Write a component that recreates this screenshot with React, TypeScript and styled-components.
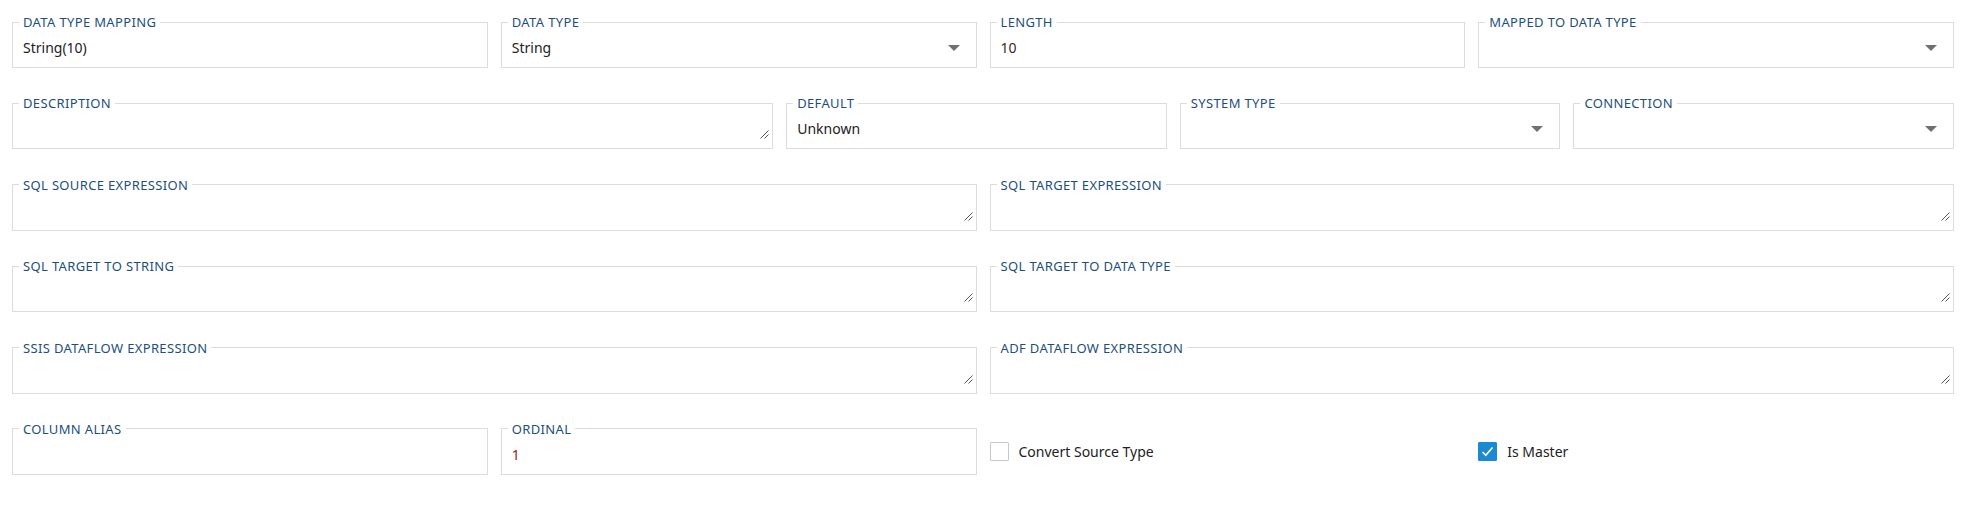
import * as React from "react";
import styled, { createGlobalStyle } from "styled-components";

const GlobalStyle = createGlobalStyle`
  html, body {
    margin: 0;
    padding: 0;
    background: #ffffff;
  }
  body {
    font-family: "Noto Sans", "Open Sans", "Liberation Sans", sans-serif;
    color: #222222;
  }
`;

const Form = styled.div`
  box-sizing: border-box;
  width: 1972px;
  display: flex;
  flex-direction: column;
  gap: 28.4px;
  padding: 15px 18px 40px 12px;
`;

const Row = styled.div<{ $cols: string }>`
  display: grid;
  grid-template-columns: ${(p) => p.$cols};
  column-gap: 13px;
`;

const Field = styled.fieldset<{ $kind?: "input" | "select" | "area" }>`
  margin: 0;
  min-width: 0;
  border: 1px solid #dcdcdc;
  padding: 0
    ${(p) => (p.$kind === "select" ? "16px" : p.$kind === "area" ? "3px" : "10px")}
    0 10px;
`;

const Legend = styled.legend`
  margin-left: -4px;
  padding: 0 4px;
  font-size: 13px;
  line-height: 14px;
  letter-spacing: 0.35px;
  color: #1d4f7c;
  text-transform: uppercase;
  white-space: nowrap;
`;

const Value = styled.div<{ $tone?: "plain" | "number" | "red" }>`
  box-sizing: border-box;
  height: 38px;
  padding: 9px 0;
  display: flex;
  align-items: center;
  justify-content: space-between;
  font-size: 14px;
  line-height: 20px;
  color: ${(p) =>
    p.$tone === "red" ? "#8a1c2c" : p.$tone === "number" ? "#3a2a22" : "#222222"};
`;

const AreaBody = styled.div`
  box-sizing: border-box;
  height: 38px;
  padding: 9px 0;
  display: flex;
  align-items: flex-end;
  justify-content: flex-end;
`;

const Caret = styled.span`
  width: 0;
  height: 0;
  border-left: 6px solid transparent;
  border-right: 6px solid transparent;
  border-top: 6px solid #707070;
  flex: none;
`;

const CheckCell = styled.label`
  display: flex;
  align-items: center;
  gap: 10px;
  padding-top: 7px;
  font-size: 14px;
  color: #222222;
`;

const Box = styled.span<{ $checked?: boolean }>`
  box-sizing: border-box;
  width: 19px;
  height: 19px;
  flex: none;
  border: 1px solid ${(p) => (p.$checked ? "#1b8ad3" : "#c9c9c9")};
  background: ${(p) => (p.$checked ? "#1b8ad3" : "#ffffff")};
  border-radius: 1px;
  display: flex;
  align-items: center;
  justify-content: center;
`;

function Grip() {
  return (
    <svg width="9" height="9" viewBox="0 0 9 9">
      <line x1="0.5" y1="8.5" x2="8.5" y2="0.5" stroke="#555" strokeWidth="1" />
      <line x1="4.5" y1="8.5" x2="8.5" y2="4.5" stroke="#555" strokeWidth="1" />
    </svg>
  );
}

function TextField(props: { label: string; value?: string; tone?: "plain" | "number" | "red" }) {
  return (
    <Field $kind="input">
      <Legend>{props.label}</Legend>
      <Value $tone={props.tone}>{props.value}</Value>
    </Field>
  );
}

function SelectField(props: { label: string; value?: string }) {
  return (
    <Field $kind="select">
      <Legend>{props.label}</Legend>
      <Value>
        <span>{props.value}</span>
        <Caret />
      </Value>
    </Field>
  );
}

function AreaField(props: { label: string }) {
  return (
    <Field $kind="area">
      <Legend>{props.label}</Legend>
      <AreaBody>
        <Grip />
      </AreaBody>
    </Field>
  );
}

function Check(props: { label: string; checked?: boolean }) {
  return (
    <CheckCell>
      <Box $checked={props.checked}>
        {props.checked && (
          <svg width="13" height="11" viewBox="0 0 13 11">
            <path d="M1.5 6 L4.8 9.3 L11.5 1.5" fill="none" stroke="#fff" strokeWidth="1.6" />
          </svg>
        )}
      </Box>
      {props.label}
    </CheckCell>
  );
}

export default function App(): React.ReactElement {
  return (
    <>
      <GlobalStyle />
      <Form>
        <Row $cols="1fr 1fr 1fr 1fr">
          <TextField label="Data Type Mapping" value="String(10)" />
          <SelectField label="Data Type" value="String" />
          <TextField label="Length" value="10" tone="number" />
          <SelectField label="Mapped To Data Type" />
        </Row>
        <Row $cols="2fr 1fr 1fr 1fr">
          <AreaField label="Description" />
          <TextField label="Default" value="Unknown" />
          <SelectField label="System Type" />
          <SelectField label="Connection" />
        </Row>
        <Row $cols="1fr 1fr">
          <AreaField label="SQL Source Expression" />
          <AreaField label="SQL Target Expression" />
        </Row>
        <Row $cols="1fr 1fr">
          <AreaField label="SQL Target To String" />
          <AreaField label="SQL Target To Data Type" />
        </Row>
        <Row $cols="1fr 1fr">
          <AreaField label="SSIS Dataflow Expression" />
          <AreaField label="ADF Dataflow Expression" />
        </Row>
        <Row $cols="1fr 1fr 1fr 1fr">
          <TextField label="Column Alias" />
          <TextField label="Ordinal" value="1" tone="red" />
          <Check label="Convert Source Type" />
          <Check label="Is Master" checked />
        </Row>
      </Form>
    </>
  );
}
